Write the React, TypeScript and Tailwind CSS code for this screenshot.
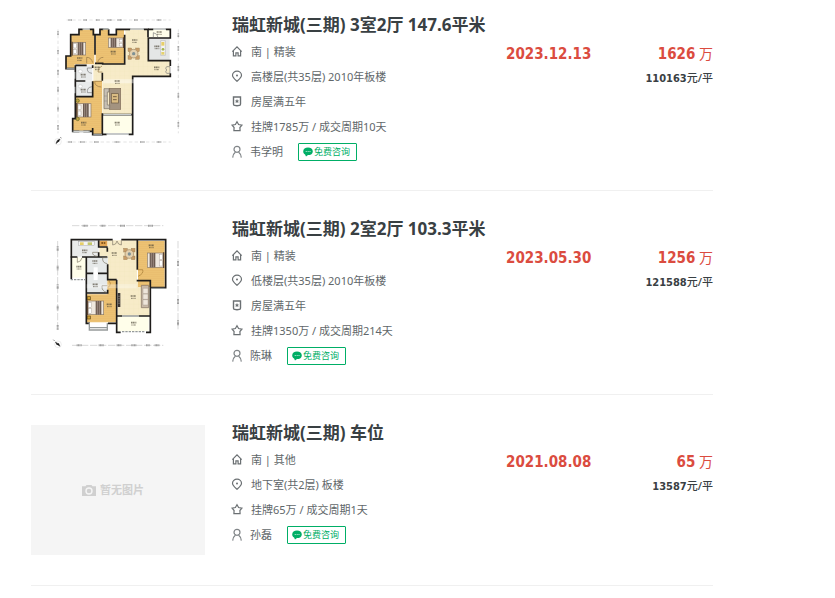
import React from 'react';

type IconName = 'house' | 'pin' | 'shield' | 'star';

interface Fact {
  icon: IconName;
  text: string;
}

interface Deal {
  id: number;
  title: string;
  facts: Fact[];
  agent: string;
  date: string;
  total: string;
  unitPrice: string;
  plan?: React.ReactNode;
}

/* ---------- icons ---------- */

function FactIcon({ name }: { name: IconName }) {
  return (
    <svg
      viewBox="0.5 0.5 12 12"
      className="h-3 w-3 shrink-0 overflow-visible text-[#6b7073]"
      fill="none"
      stroke="currentColor"
      strokeWidth={1.2}
      aria-hidden="true"
    >
      {name === 'house' && (
        <>
          <path d="M0.8 6.2 L5.5 1.4 L10.2 6.2 M1.9 5.4 V10.4 H4.4 V7.4 H6.6 V10.4 H9.1 V5.4" />
        </>
      )}
      {name === 'pin' && (
        <>
          <path d="M5.5 10.8 C3.5 9 1 7.2 1 4.8 A4.5 4.1 0 0 1 10 4.8 C10 7.2 7.5 9 5.5 10.8 Z" />
          <circle cx="5.5" cy="5" r="1" fill="currentColor" stroke="none" />
        </>
      )}
      {name === 'shield' && (
        <>
          <path d="M2 1.5 H9 V8.6 Q9 9.8 8 9.9 L5.5 10.3 L3 9.9 Q2 9.8 2 8.6 Z" strokeWidth={1.4} />
          <path d="M5.5 3.6 L6.2 4.9 L7.5 5 L6.6 6 L6.9 7.4 L5.5 6.8 L4.1 7.4 L4.4 6 L3.5 5 L4.8 4.9 Z" fill="currentColor" stroke="none" />
        </>
      )}
      {name === 'star' && (
        <path d="M5.5 1.3 L7.1 4 L10.4 4.6 L8.4 7 L8.6 10.2 H2.4 L2.6 7 L0.6 4.6 L3.9 4 Z" />
      )}
    </svg>
  );
}

function AgentIcon() {
  return (
    <svg viewBox="0.5 0 12 14" className="h-[14px] w-3 shrink-0 text-[#808588]" fill="none" stroke="currentColor" strokeWidth={1.2} aria-hidden="true">
      <circle cx="5.5" cy="4.3" r="3" />
      <path d="M1.2 12.6 C1.4 9.6 2.8 7.9 4 7 M9.8 12.6 C9.6 9.6 8.2 7.9 7 7" />
    </svg>
  );
}

function ChatIcon() {
  return (
    <svg viewBox="0 0 10 10" className="h-[10px] w-[10px] shrink-0" aria-hidden="true">
      <path d="M5 0.5 C7.8 0.5 9.8 2.2 9.8 4.4 C9.8 6.6 7.8 8.1 5 8.1 L3 9.4 L2.1 7.5 C0.9 6.8 0.2 5.7 0.2 4.4 C0.2 2.2 2.2 0.5 5 0.5 Z" fill="#00ae66" />
      <circle cx="3.2" cy="4.5" r="0.5" fill="#fff" />
      <circle cx="5.1" cy="4.5" r="0.5" fill="#fff" />
      <circle cx="7" cy="4.5" r="0.5" fill="#fff" />
    </svg>
  );
}

function CameraIcon() {
  return (
    <svg viewBox="0 0 14 11" className="h-[11px] w-[14px] shrink-0" aria-hidden="true">
      <path d="M0 1.2 H3.5 L4.5 0 H9.5 L10.5 1.2 H14 V11 H0 Z" fill="#d0d0d0" />
      <circle cx="7" cy="6" r="3" fill="none" stroke="#f5f5f5" strokeWidth="1.4" />
    </svg>
  );
}

/* ---------- floor plans ---------- */

// room caption: a short dark mark with a smaller one below
function Caption({ x, y }: { x: number; y: number }) {
  return (
    <g stroke="#4a4335" opacity="0.65">
      <path d={`M${x - 8} ${y - 2} h16`} strokeWidth="5" strokeDasharray="4 1" />
      <path d={`M${x - 7} ${y + 5} h14`} strokeWidth="3" strokeDasharray="3 1" />
    </g>
  );
}

function Bed({ x, y, w, h, flip }: { x: number; y: number; w: number; h: number; flip?: boolean }) {
  const head = flip ? x + w - 13 : x;
  const runner = flip ? x + 7 : x + w - 24;
  return (
    <g>
      <rect x={x} y={y} width={w} height={h} fill="#efe8df" stroke="#8b7a67" strokeWidth="2" />
      <rect x={head + 2} y={y + 4} width="9" height={h / 2 - 6} fill="#fff" stroke="#8d8177" />
      <rect x={head + 2} y={y + h / 2 + 2} width="9" height={h / 2 - 6} fill="#fff" stroke="#8d8177" />
      <rect x={runner} y={y} width="17" height={h} fill="#6b5a50" />
      <path d={`M${runner + 5} ${y} v${h} M${runner + 11} ${y} v${h}`} stroke="#b3a399" strokeWidth="2" />
      <path d={`M${flip ? x + w + 2 : x - 2} ${y - 2} v${h + 4}`} stroke="#5d4634" strokeWidth="4" />
    </g>
  );
}

function DiningSet({ x, y }: { x: number; y: number }) {
  return (
    <g>
      <g fill="#c79c66" stroke="#8d6f4a">
        <rect x={x - 17} y={y - 17} width="11" height="11" />
        <rect x={x + 6} y={y - 17} width="11" height="11" />
        <rect x={x - 17} y={y + 6} width="11" height="11" />
        <rect x={x + 6} y={y + 6} width="11" height="11" />
      </g>
      <circle cx={x} cy={y} r="13" fill="#e3d0ae" stroke="#a3835a" strokeWidth="2" />
      <circle cx={x} cy={y} r="5" fill="#7e9195" />
    </g>
  );
}

function PlanDefs({ id }: { id: string }) {
  return (
    <defs>
      <pattern id={`${id}-wood`} width="12" height="12" patternUnits="userSpaceOnUse">
        <rect width="12" height="12" fill="#edc374" />
        <path d="M0 4 H12 M0 10 H12" stroke="#e2b463" />
      </pattern>
      <pattern id={`${id}-tile`} width="14" height="14" patternUnits="userSpaceOnUse">
        <rect width="14" height="14" fill="#f7ebc8" />
        <path d="M0 0 H14 M0 0 V14" stroke="#efe0b4" />
      </pattern>
    </defs>
  );
}

function ThreeRoomPlan() {
  return (
    <svg viewBox="-27 21 522 390" className="block h-[130px] w-full" role="img" aria-label="户型图">
      <PlanDefs id="three" />
      {/* rulers */}
      <g stroke="#a0a0a0" strokeWidth="2" fill="none">
        <path d="M80 30 H392 M80 396 H392 M54 58 V370 M415 58 V370" strokeDasharray="10 7" opacity="0.45" />
        <path d="M85 30 h12 M130 30 h12 M168 30 h12 M202 30 h14 M232 30 h14 M282 30 h12 M350 30 h14 M85 396 h12 M120 396 h14 M162 396 h14 M224 396 h14 M300 396 h14 M350 396 h14" strokeWidth="5" strokeDasharray="3 1" />
        <path d="M54 64 v12 M54 120 v12 M54 180 v14 M54 232 v14 M54 290 v14 M54 345 v14 M415 70 v12 M415 108 v14 M415 168 v14 M415 250 v14 M415 336 v14" strokeWidth="5" strokeDasharray="3 1" />
      </g>
      {/* floors */}
      <path d="M92 74 H118 V58 H163 V163 H104 V176 H78 V138 H92 Z" fill="url(#three-wood)" />
      <path d="M167 74 H178 V58 H206 V74 H228 V58 H252 V161 H167 Z" fill="url(#three-wood)" />
      <path d="M256 58 H324 V152 H390 V198 H278 V312 H187 V212 H160 V162 H256 Z" fill="url(#three-tile)" />
      <rect x="108" y="166" width="49" height="46" fill="#e9ebeb" />
      <rect x="108" y="214" width="49" height="46" fill="#e9ebeb" />
      <path d="M106 261 H158 V212 H186 V374 H158 V364 H98 V328 H106 Z" fill="url(#three-wood)" />
      <rect x="190" y="314" width="86" height="56" fill="#fffeea" />
      <rect x="327" y="58" width="62" height="24" fill="#fffeea" />
      <rect x="327" y="84" width="62" height="66" fill="#e4e6e6" />
      {/* walls */}
      <g fill="none" stroke="#1e1c1a" strokeWidth="5">
        <path d="M106 176 H78 V138 H92 V74 H117 V58 H128 M150 58 H160 V74 H180 V58 H190 M206 58 V74 H229 V58 H270 M312 58 H324 V82 M165 74 V134 M165 160 H188 V162 H254 V74" />
        <path d="M324 58 H340 M378 58 H391 V84 H325 V152 H391 V168 M391 190 V199 H278 V373 H266 M188 373 H200 M188 314 H276 M187 188 V212 M187 310 V374 H158 V354 M158 364 H130 M118 364 H98 V326 H106 V166 M106 213 H136 M106 260 H158 V214 M158 166 V174 M106 166 H140" />
      </g>
      <g stroke="#8f9494" strokeWidth="5" fill="none">
        <path d="M128 57 H150 M188 57 H206 M270 57 H312 M340 57 H378 M80 176 H104 M98 364 H150 M200 372 H266 M160 374 H186" />
        <path d="M130 57 H148 M272 57 H310 M342 57 H376 M102 364 H146 M202 372 H264" stroke="#fff" strokeWidth="2" />
      </g>
      {/* bathroom windows and balcony rail */}
      <path d="M104 186 V206 M104 230 V250 M190 314 H274" stroke="#c8cccc" strokeWidth="4" />
      {/* doors */}
      <g fill="none" stroke="#927342" strokeWidth="2">
        <path d="M140 160 V142 Q154 142 158 158 M172 160 Q176 142 190 142 M187 186 H174 Q172 174 186 168 M186 214 H164 Q164 230 184 231" />
        <path d="M156 174 H142 Q140 188 156 190 M156 248 H142 Q140 232 156 230 M340 82 V68 Q352 70 354 82" stroke="#777" />
        <path d="M380 170 H390 V190 H380 M380 170 Q374 174 380 180 Q374 186 380 190" stroke="#777" />
      </g>
      {/* furniture */}
      <Bed x={98} y={97} w={39} h={38} />
      <Bed x={205} y={84} w={44} h={28} flip />
      <Bed x={112} y={281} w={41} h={40} />
      <g fill="#c0a342" stroke="#5e6326" strokeWidth="2">
        <circle cx="113" cy="272" r="5" />
        <circle cx="113" cy="327" r="5" />
      </g>
      <DiningSet x={281} y={131} />
      <rect x="208" y="235" width="34" height="63" fill="#a39380" stroke="#806d58" strokeWidth="2" />
      <rect x="214" y="251" width="21" height="28" fill="#dabc83" stroke="#6b5944" strokeWidth="2" />
      <path d="M219 260 h11 M219 269 h11" stroke="#786047" strokeWidth="3" />
      <path d="M192 236 H207 V246 H202 V285 H209 V296 H192 Z" fill="#c7c0b4" stroke="#776e64" strokeWidth="2" />
      <path d="M192 258 h10 M192 273 h10" stroke="#776e64" />
      <path d="M362 92 H376 V136 H362 Z" fill="#f4f4f4" stroke="#8a8a8a" />
      <rect x="364" y="96" width="9" height="11" fill="#e7cf68" />
      <circle cx="369" cy="118" r="4" fill="#a2b44b" />
      <rect x="364" y="126" width="9" height="8" fill="#e5d16c" />
      <ellipse cx="121" cy="184" rx="6" ry="5" fill="#fff" stroke="#aaa" />
      <ellipse cx="121" cy="229" rx="6" ry="5" fill="#fff" stroke="#aaa" />
      <path d="M190 214 H290" stroke="#fff" strokeWidth="12" opacity="0.4" />
      <Caption x={119} y={146} />
      <Caption x={220} y={127} />
      <Caption x={284} y={92} />
      <Caption x={358} y={68} />
      <Caption x={351} y={111} />
      <Caption x={350} y={174} />
      <Caption x={172} y={174} />
      <Caption x={232} y={215} />
      <Caption x={130} y={196} />
      <Caption x={130} y={241} />
      <Caption x={131} y={340} />
      <Caption x={232} y={340} />
      {/* compass */}
      <circle cx="54" cy="395" r="10" fill="#fff" stroke="#c9c9c9" />
      <path d="M48 401 L51 392 L55 395 Z M56 396 L60 387 L52 391 Z" fill="#111" stroke="#111" />
      <path d="M61 381 l3 4" stroke="#555" strokeWidth="2" />
    </svg>
  );
}

function TwoRoomPlan() {
  return (
    <svg viewBox="-27 18 522 390" className="block h-[130px] w-full" role="img" aria-label="户型图">
      <PlanDefs id="two" />
      {/* rulers */}
      <g stroke="#a0a0a0" strokeWidth="2" fill="none">
        <path d="M96 32 H370 M96 391 H370 M53 78 V348 M414 78 V348" strokeDasharray="22 5" opacity="0.6" />
        <path d="M128 32 h16 M182 32 h14 M240 32 h15 M324 32 h15 M110 391 h16 M176 391 h16 M230 391 h14 M274 391 h16 M318 391 h12 M344 391 h14" strokeWidth="6" strokeDasharray="3 1" />
        <path d="M53 94 v14 M53 152 v14 M53 208 v14 M53 272 v14 M53 330 v14 M414 138 v16 M414 252 v16 M414 316 v16" strokeWidth="6" strokeDasharray="3 1" />
      </g>
      {/* floors */}
      <rect x="97" y="77" width="79" height="48" fill="#e9ebeb" />
      <path d="M178 96 H203 V76 H291 V197 H329 V302 H233 V192 H203 V124 H178 Z" fill="url(#two-tile)" />
      <rect x="178" y="77" width="24" height="17" fill="#e3a654" />
      <rect x="96" y="128" width="41" height="60" fill="#fffeea" />
      <rect x="142" y="126" width="61" height="48" fill="#e6e9e9" />
      <rect x="142" y="178" width="61" height="56" fill="#e6e9e9" />
      <rect x="294" y="78" width="80" height="138" fill="url(#two-wood)" />
      <path d="M141 238 H202 V194 H229 V322 H141 Z" fill="url(#two-wood)" />
      <rect x="232" y="305" width="94" height="43" fill="#fffeea" />
      {/* walls */}
      <g fill="none" stroke="#1e1c1a" strokeWidth="5">
        <path d="M94 192 V74 H218 M244 74 H377 V218 H332 M292 76 V164 M290 197 H331 V352 H318 M242 352 H230 V194 M230 303 H246 M296 303 H331" />
        <path d="M92 126 H112 M126 126 H176 V112 M176 76 V96 H203 M202 98 V110 M202 126 H178 M203 148 V194 H230 M139 126 V234 H203 V224 M139 175 H160 M174 175 H203 M139 234 V325 H150 M204 325 H230" />
      </g>
      <g stroke="#969b9b" strokeWidth="4" fill="none">
        <path d="M148 324 V345 H202 V324 M148 338 H202 M334 220 H374 M246 303 H296" />
        <path d="M92 194 H136 M246 350 H316" strokeDasharray="7 3" />
      </g>
      <rect x="161" y="157" width="12" height="38" fill="#fff" />
      {/* doors */}
      <g fill="none" stroke="#7d7565" strokeWidth="2">
        <path d="M218 76 V90 Q229 90 231 78 Q234 90 244 90 V76" />
        <path d="M174 112 H158 Q156 122 172 124 M112 126 V142 Q124 140 126 128 M202 128 H188 Q186 144 202 146 M202 212 H186 Q184 228 200 232" />
        <path d="M292 164 H308 Q312 176 294 184 M204 196 Q218 204 204 218" stroke="#a37a35" />
      </g>
      {/* furniture */}
      <rect x="116" y="80" width="48" height="12" fill="#f4f4f4" stroke="#888" />
      <rect x="120" y="82" width="11" height="8" fill="#e7cf68" />
      <rect x="143" y="82" width="13" height="8" fill="#c3c76c" />
      <path d="M184 84 h12" stroke="#70430e" strokeWidth="5" strokeDasharray="5 2" />
      <DiningSet x={268} y={117} />
      <Bed x={322} y={114} w={47} h={43} flip />
      <Bed x={144} y={258} w={47} h={41} />
      <g fill="#cfa135" stroke="#654a16" strokeWidth="2">
        <rect x="142" y="245" width="9" height="9" />
        <rect x="142" y="303" width="9" height="9" />
      </g>
      <path d="M233 234 h8 v42 h-8 Z" fill="#3a3533" />
      <path d="M237 242 v26" stroke="#b8b0a5" strokeWidth="2" strokeDasharray="4 3" />
      <path d="M304 211 H326 V278 H304 Z" fill="#c8b9a8" stroke="#7e6d5e" strokeWidth="2" />
      <path d="M309 220 h15 v16 h-15 Z M309 237 h15 v16 h-15 Z M309 254 h15 v16 h-15 Z" fill="#eee5da" stroke="#95877b" />
      <path d="M140 214 H290" stroke="#fff" strokeWidth="12" opacity="0.3" />
      <Caption x={134} y={108} />
      <Caption x={165} y={140} />
      <Caption x={117} y={157} />
      <Caption x={166} y={210} />
      <Caption x={223} y={116} />
      <Caption x={334} y={93} />
      <Caption x={208} y={270} />
      <Caption x={280} y={245} />
      <Caption x={281} y={325} />
      {/* compass */}
      <circle cx="54" cy="388" r="10" fill="#fff" stroke="#c9c9c9" />
      <path d="M46 381 L55 386 L51 390 Z M52 389 L60 394 L56 385 Z" fill="#111" stroke="#111" />
      <path d="M40 374 l4 4" stroke="#555" strokeWidth="2" />
    </svg>
  );
}

/* ---------- data ---------- */

const deals: Deal[] = [
  {
    id: 1,
    title: '瑞虹新城(三期) 3室2厅 147.6平米',
    facts: [
      { icon: 'house', text: '南 | 精装' },
      { icon: 'pin', text: '高楼层(共35层) 2010年板楼' },
      { icon: 'shield', text: '房屋满五年' },
      { icon: 'star', text: '挂牌1785万 / 成交周期10天' },
    ],
    agent: '韦学明',
    date: '2023.12.13',
    total: '1626',
    unitPrice: '110163',
    plan: <ThreeRoomPlan />,
  },
  {
    id: 2,
    title: '瑞虹新城(三期) 2室2厅 103.3平米',
    facts: [
      { icon: 'house', text: '南 | 精装' },
      { icon: 'pin', text: '低楼层(共35层) 2010年板楼' },
      { icon: 'shield', text: '房屋满五年' },
      { icon: 'star', text: '挂牌1350万 / 成交周期214天' },
    ],
    agent: '陈琳',
    date: '2023.05.30',
    total: '1256',
    unitPrice: '121588',
    plan: <TwoRoomPlan />,
  },
  {
    id: 3,
    title: '瑞虹新城(三期) 车位',
    facts: [
      { icon: 'house', text: '南 | 其他' },
      { icon: 'pin', text: '地下室(共2层) 板楼' },
      { icon: 'star', text: '挂牌65万 / 成交周期1天' },
    ],
    agent: '孙磊',
    date: '2021.08.08',
    total: '65',
    unitPrice: '13587',
  },
];

/* ---------- list ---------- */

function NoPicture() {
  return (
    <div className="flex h-[130px] items-center justify-center gap-1 bg-[#f5f5f5] pr-[10px] text-[11px] font-bold text-[#d0d0d0]">
      <CameraIcon />
      <span>暂无图片</span>
    </div>
  );
}

function DealItem({ deal }: { deal: Deal }) {
  return (
    <li className="flex border-b border-[#f0f0f0] pt-[30px] pb-[29px] first:pt-[17px]">
      <a href="#" className="w-[174px] shrink-0 pb-px">
        {deal.plan ?? <NoPicture />}
      </a>

      <div className="ml-[27px] min-w-0 flex-1">
        <h2 className="mb-[6px] text-[17px] leading-4 font-bold whitespace-nowrap text-[#394043]">
          <a href="#">{deal.title}</a>
        </h2>

        <div className="flex">
          <div className="min-w-0 flex-1">
            <ul>
              {deal.facts.map((fact) => (
                <li key={fact.icon} className="flex h-[25px] items-center gap-[7px]">
                  <FactIcon name={fact.icon} />
                  <span className="whitespace-nowrap">{fact.text}</span>
                </li>
              ))}
            </ul>
            <div className="mt-1 flex h-[18px] items-center">
              <AgentIcon />
              <a href="#" className="ml-[6px]">{deal.agent}</a>
              <button
                type="button"
                className="ml-[15px] flex h-[18px] cursor-pointer items-center gap-px rounded-[1px] border border-[#00ae66] pr-[6px] pl-1 text-[9px] text-[#00ae66]"
              >
                <ChatIcon />
                免费咨询
              </button>
            </div>
          </div>

          <time className="w-[87px] shrink-0 pt-[3px] font-['DejaVu_Sans_Condensed','DejaVu_Sans'] text-[15px] leading-6 font-bold text-[#db4c3f]">
            {deal.date}
          </time>

          <div className="w-[120px] shrink-0 pt-[3px] text-right">
            <p className="text-[14px] leading-6 text-[#db4c3f]">
              <span className="font-['DejaVu_Sans_Condensed','DejaVu_Sans'] text-[15px] font-bold">{deal.total}</span> 万
            </p>
            <p className="leading-6 font-medium text-[#394043]">
              <span className="font-['DejaVu_Sans_Condensed','DejaVu_Sans'] font-bold">{deal.unitPrice}</span>元/平
            </p>
          </div>
        </div>
      </div>
    </li>
  );
}

export default function App() {
  return (
    <main className="min-h-screen bg-white px-[31px] font-['Noto_Sans','Noto_Sans_CJK_SC',sans-serif] text-[11px] leading-4 text-[#61676a]">
      <ul className="w-full max-w-[682px]">
        {deals.map((deal) => (
          <DealItem key={deal.id} deal={deal} />
        ))}
      </ul>
    </main>
  );
}
